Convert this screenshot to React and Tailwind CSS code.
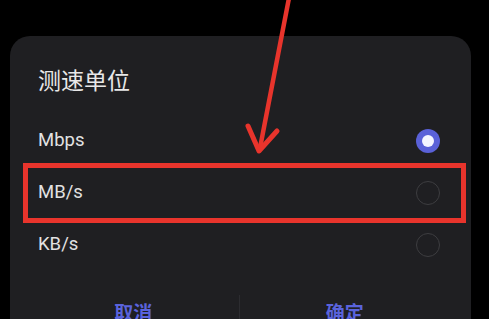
import React from 'react';

const options = [
  { label: 'Mbps', checked: true },
  { label: 'MB/s', checked: false, highlight: true },
  { label: 'KB/s', checked: false },
];

const Radio = ({ checked }) =>
  checked ? (
    <span className="w-[24px] h-[24px] rounded-full bg-[#5a61d8] flex items-center justify-center">
      <span className="w-[12px] h-[12px] rounded-full bg-[#f4f5ff]" />
    </span>
  ) : (
    <span className="w-[24px] h-[24px] rounded-full border-[1.5px] border-[#3d3d40]" />
  );

const App = () => (
  <div className="relative w-[489px] h-[319px] overflow-hidden bg-black font-['Roboto','Noto_Sans_CJK_SC',sans-serif]">
    {/* Dialog */}
    <div className="ml-[10px] mt-[36px] w-[461px] h-[320px] rounded-[20px] bg-[#1f1f22] pt-[28px]">
      <h2 className="pl-[28px] text-[23px] leading-[30px] text-[#e8e8e8] font-['Noto_Sans_CJK_SC',sans-serif]">
        测速单位
      </h2>

      <div className="mt-[21px] flex flex-col">
        {options.map((o) => (
          <div key={o.label} className="relative h-[52px] flex items-center justify-between pl-[28px] pr-[31px]">
            <span className="text-[18.5px] text-[#e2e2e2]">{o.label}</span>
            <Radio checked={o.checked} />
            {o.highlight && (
              <div className="absolute left-[13px] right-[5px] -top-[4px] -bottom-[4px] border-[5px] border-[#e8342c]" />
            )}
          </div>
        ))}
      </div>

      {/* Buttons */}
      <div className="mt-[19px] flex pl-[18px] pr-[21px] font-['Noto_Sans_CJK_SC',sans-serif]">
        <button className="flex-1 h-[40px] leading-[40px] text-[19px] font-semibold text-[#5a63dc] pt-[2px]">取消</button>
        <span className="w-px h-[30px] mt-[5px] bg-[#2c2c30]" />
        <button className="flex-1 h-[40px] leading-[40px] text-[19px] font-semibold text-[#5a63dc] pt-[2px]">确定</button>
      </div>
    </div>

    {/* Annotation arrow */}
    <svg className="absolute inset-0 pointer-events-none" width="489" height="319" viewBox="0 0 489 319">
      <line x1="289" y1="-2" x2="260" y2="148" stroke="#e8342c" strokeWidth="4.5" strokeLinecap="round" />
      <polyline points="248,126 259,151 277,131" fill="none" stroke="#e8342c" strokeWidth="5" strokeLinecap="round" strokeLinejoin="round" />
    </svg>
  </div>
);

export default App;
